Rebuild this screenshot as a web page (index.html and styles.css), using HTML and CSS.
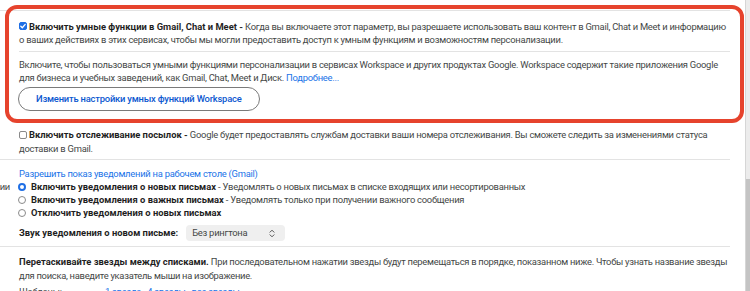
FILE: index.html
```html
<!DOCTYPE html>
<html lang="ru">
<head>
<meta charset="utf-8">
<link rel="stylesheet" href="styles.css">
</head>
<body>
<div class="page">
  <div class="settings">
    <section class="row row-smart">
      <div class="label"></div>
      <div class="content">
        <p class="line first"><span class="checkbox checked"><svg viewBox="0 0 8 8" width="8" height="8"><path d="M1.8 4.2 L3.3 5.7 L6.2 2.4" fill="none" stroke="#fff" stroke-width="1.3" stroke-linecap="round" stroke-linejoin="round"/></svg></span><b>Включить умные функции в Gmail, Chat и Meet -</b> Когда вы включаете этот параметр, вы разрешаете использовать ваш контент в Gmail, Chat и Meet и информацию о ваших действиях в этих сервисах, чтобы мы могли предоставить доступ к умным функциям и возможностям персонализации.</p>
        <hr class="inner-rule">
        <p class="line">Включите, чтобы пользоваться умными функциями персонализации в сервисах Workspace и других продуктах Google. Workspace содержит такие приложения Google для бизнеса и учебных заведений, как Gmail, Chat, Meet и Диск. <a class="link">Подробнее...</a></p>
        <button class="pill">Изменить настройки умных функций Workspace</button>
        <p class="line parcel"><span class="checkbox"></span><b>Включить отслеживание посылок -</b> Google будет предоставлять службам доставки ваши номера отслеживания. Вы сможете следить за изменениями статуса доставки в Gmail.</p>
      </div>
    </section>
    <section class="row row-notify">
      <div class="label"><span>ии</span></div>
      <div class="content">
        <p class="line"><a class="link">Разрешить показ уведомлений на рабочем столе (Gmail)</a></p>
        <ul class="radios">
          <li><span class="radio on"></span><b>Включить уведомления о новых письмах</b>&nbsp;- Уведомлять о новых письмах в списке входящих или несортированных</li>
          <li><span class="radio"></span><b>Включить уведомления о важных письмах</b>&nbsp;- Уведомлять только при получении важного сообщения</li>
          <li><span class="radio"></span><b>Отключить уведомления о новых письмах</b></li>
        </ul>
        <div class="sound">
          <b>Звук уведомления о новом письме:</b>
          <span class="select">Без рингтона<svg viewBox="0 0 6 9" width="6" height="9"><path d="M1 3.2 L3 1.2 L5 3.2 M1 5.8 L3 7.8 L5 5.8" fill="none" stroke="#555" stroke-width="1" stroke-linecap="round" stroke-linejoin="round"/></svg></span>
        </div>
      </div>
    </section>
    <section class="row row-stars">
      <div class="label"></div>
      <div class="content">
        <p class="line stars-text"><b>Перетаскивайте звезды между списками.</b> При последовательном нажатии звезды будут перемещаться в порядке, показанном ниже. Чтобы узнать название звезды для поиска, наведите указатель мыши на изображение.</p>
        <div class="presets"><span class="preset-label">Шаблоны:</span><a class="link">1 звезда</a><a class="link">4 звезды</a><a class="link">все звезды</a></div>
      </div>
    </section>
  </div>
  <div class="highlight"></div>
  <div class="scrollbar"><div class="thumb"></div></div>
</div>
</body>
</html>
```

FILE: styles.css
```css
* { box-sizing: border-box; }
html, body { margin: 0; padding: 0; }
body {
  width: 750px;
  height: 291px;
  overflow: hidden;
  background: #fff;
  font-family: Roboto, "Liberation Sans", Arial, sans-serif;
  font-size: 9.4px;
  line-height: 13.5px;
  letter-spacing: -0.25px;
  color: #444746;
}
b { color: #1f1f1f; font-weight: bold; letter-spacing: 0; }
.page {
  position: relative;
  display: flex;
  height: 291px;
}
.settings {
  width: 745px;
  padding-right: 15px;
}
.row {
  display: flex;
  gap: 9px;
  border-top: 1px solid #e3e3e3;
}
.label {
  width: 10px;
  overflow: hidden;
  display: flex;
  justify-content: flex-end;
  white-space: nowrap;
  color: #444746;
}
.content { flex: 1; min-width: 0; }
.line { margin: 0; }
.stars-text { letter-spacing: -0.28px; }
.row-smart { margin-top: 10px; padding-top: 8.5px; padding-bottom: 4px; }
.inner-rule {
  border: 0;
  border-top: 1px solid #e3e3e3;
  margin: 4.5px 0 5.5px;
  height: 0;
}
.checkbox {
  display: inline-block;
  width: 8px;
  height: 8px;
  border-radius: 2px;
  border: 1px solid #8a8a8a;
  background: #fff;
  vertical-align: -0.5px;
  margin-right: 2px;
  position: relative;
}
.checkbox.checked {
  background: #1f6fe5;
  border-color: #1f6fe5;
}
.checkbox svg { position: absolute; left: -1px; top: -1px; }
.link { color: #1a73e8; text-decoration: none; cursor: pointer; }
.pill {
  display: block;
  margin-top: 2px;
  height: 24.5px;
  padding: 0 17px;
  border: 1px solid #7a7a7a;
  border-radius: 13px;
  background: #fff;
  font-family: inherit;
  font-size: 9.4px;
  font-weight: 500;
  letter-spacing: -0.2px;
  color: #0b57d0;
  margin-left: -1px;
}
.parcel { margin-top: 17px; }
.row-notify { padding-top: 6.5px; height: 87px; }
.row-notify .label { padding-top: 13px; }
.radios { list-style: none; margin: 0; padding: 0; }
.radios li { line-height: 13px; display: flex; align-items: center; white-space: nowrap; }
.radio {
  width: 8px;
  height: 8px;
  border-radius: 50%;
  border: 1px solid #8a8a8a;
  background: #fff;
  margin-right: 5px;
  flex: none;
  margin-left: -1px;
}
.radio.on {
  border: 2.5px solid #1f6fe5;
}
.sound {
  display: flex;
  align-items: center;
  gap: 8px;
  margin-top: 6px;
}
.select {
  display: flex;
  align-items: center;
  justify-content: space-between;
  width: 99px;
  height: 16px;
  padding: 0 10px 0 6px;
  background: #efefef;
  border-radius: 4px;
  color: #444746;
}
.row-stars { padding-top: 8px; }
.presets { margin-top: 3px; display: flex; }
.preset-label { width: 86px; }
.presets .link { margin-right: 6px; }
.highlight {
  position: absolute;
  left: 5px;
  top: 5px;
  width: 739px;
  height: 118px;
  border: 4px solid #e6432d;
  border-radius: 12px;
  pointer-events: none;
}
.scrollbar {
  width: 5px;
  height: 291px;
  background: #ececec;
  border-left: 1px solid #d6d6d6;
  display: flex;
  flex-direction: column;
  justify-content: flex-end;
}
.thumb { height: 112px; background: #c4c4c4; }
```
